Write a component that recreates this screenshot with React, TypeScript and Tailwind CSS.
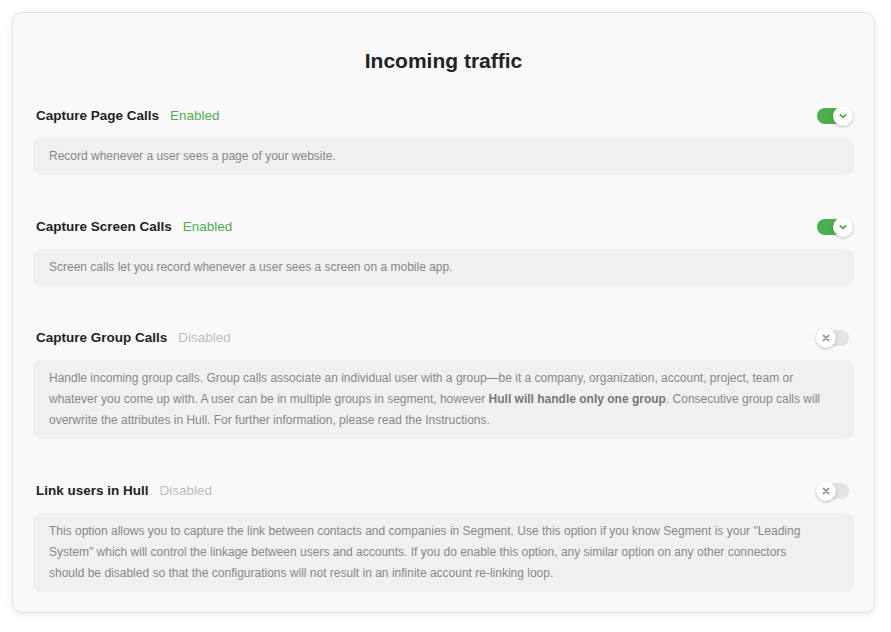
import React from "react";

type Setting = {
  title: string;
  enabled: boolean;
  body: React.ReactNode;
  wide?: boolean;
};

const SETTINGS: Setting[] = [
  {
    title: "Capture Page Calls",
    enabled: true,
    body: "Record whenever a user sees a page of your website.",
  },
  {
    title: "Capture Screen Calls",
    enabled: true,
    body: "Screen calls let you record whenever a user sees a screen on a mobile app.",
  },
  {
    title: "Capture Group Calls",
    enabled: false,
    body: (
      <>
        Handle incoming group calls. Group calls associate an individual user with a group—be it a company, organization,
        account, project, team or whatever you come up with. A user can be in multiple groups in segment, however{" "}
        <b className="font-bold text-[#777]">Hull will handle only one group</b>. Consecutive group calls will overwrite the
        attributes in Hull. For further information, please read the Instructions.
      </>
    ),
  },
  {
    title: "Link users in Hull",
    enabled: false,
    wide: true,
    body: 'This option allows you to capture the link between contacts and companies in Segment. Use this option if you know Segment is your "Leading System" which will control the linkage between users and accounts. If you do enable this option, any similar option on any other connectors should be disabled so that the configurations will not result in an infinite account re-linking loop.',
  },
];

function Toggle({ on }: { on: boolean }) {
  return (
    <div className="relative w-[36px] h-[20px] shrink-0">
      <div
        className={
          "absolute left-[2px] right-[2px] top-[2px] h-[16px] rounded-full " + (on ? "bg-[#4cae4f]" : "bg-[#e4e4e4]")
        }
      />
      <div
        className={
          "absolute top-0 w-[20px] h-[20px] rounded-full bg-white flex items-center justify-center shadow-[0_1px_3px_rgba(0,0,0,0.25)] " +
          (on ? "right-[-2px]" : "left-[1px]")
        }
      >
        {on ? (
          <svg width="10" height="10" viewBox="0 0 10 10">
            <path d="M2.3 3.8 L5 6.4 L7.7 3.8" fill="none" stroke="#4cae4f" strokeWidth="1.8" strokeLinecap="round" strokeLinejoin="round" />
          </svg>
        ) : (
          <svg width="10" height="10" viewBox="0 0 10 10">
            <path d="M2.5 2.5 L7.5 7.5 M7.5 2.5 L2.5 7.5" fill="none" stroke="#9a9a9a" strokeWidth="1.8" strokeLinecap="round" />
          </svg>
        )}
      </div>
    </div>
  );
}

export default function App() {
  return (
    <div
      className="min-h-[632px] bg-white pt-3 pl-3 pr-4"
      style={{ fontFamily: '"Liberation Sans", Arial, sans-serif' }}
    >
      <div className="rounded-[10px] border border-[#e2e2e2] bg-[#f9f9f9] shadow-[0_2px_8px_rgba(0,0,0,0.08)] px-5 pt-[34px] pb-5">
        <h1 className="text-center text-[21px] leading-[28px] font-bold text-[#222]">Incoming traffic</h1>

        <div className="mt-[31px] flex flex-col gap-[42px]">
          {SETTINGS.map((s) => (
            <div key={s.title}>
              <div className="flex items-center h-[20px] pl-[3px] pr-[3px]">
                <span className="text-[13.5px] font-bold text-[#222]">{s.title}</span>
                <span className={"ml-[11px] text-[13.5px] " + (s.enabled ? "text-[#4caf50]" : "text-[#bdbdbd]")}>
                  {s.enabled ? "Enabled" : "Disabled"}
                </span>
                <div className="ml-auto">
                  <Toggle on={s.enabled} />
                </div>
              </div>
              <div
                className={
                  "mt-3 rounded-lg bg-[#f0f0f0] pl-4 py-2 text-[12px] leading-[21px] text-[#888] " +
                  (s.wide ? "pr-[36px]" : "pr-5")
                }
              >
                {s.body}
              </div>
            </div>
          ))}
        </div>
      </div>
    </div>
  );
}
